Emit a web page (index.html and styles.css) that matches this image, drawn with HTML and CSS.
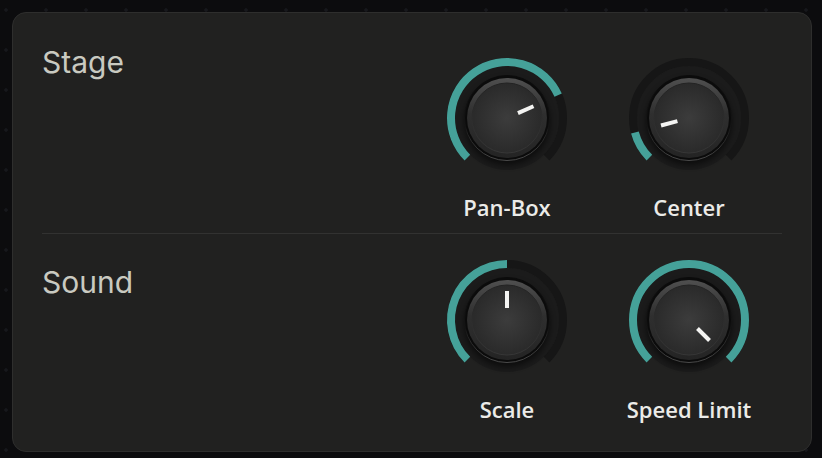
FILE: index.html
```html
<!DOCTYPE html>
<html lang="en">
<head>
    <meta charset="UTF-8">
    <meta name="viewport" content="width=device-width, initial-scale=1.0">
    <title>Stage &amp; Sound</title>
    <link rel="stylesheet" href="styles.css">
</head>
<body>
    <div class="panel">
        <div class="section section-first">
            <h2 class="section-title">Stage</h2>
            <div class="knobs">
                <div class="knob">
                    <svg class="dial" viewBox="0 0 120 120">
                        <use href="#dial-base"/>
                        <path class="value" d="M 20.40 99.60 A 56 56 0 1 1 111.16 37.22"/>
                        <use href="#dial-cap"/>
                        <line class="pointer" x1="60" y1="48" x2="60" y2="31" transform="rotate(66 60 60)"/>
                    </svg>
                    <div class="knob-label">Pan-Box</div>
                </div>
                <div class="knob">
                    <svg class="dial" viewBox="0 0 120 120">
                        <use href="#dial-base"/>
                        <path class="value" d="M 20.40 99.60 A 56 56 0 0 1 5.91 74.49"/>
                        <use href="#dial-cap"/>
                        <line class="pointer" x1="60" y1="48" x2="60" y2="31" transform="rotate(-105 60 60)"/>
                    </svg>
                    <div class="knob-label">Center</div>
                </div>
            </div>
        </div>
        <div class="section">
            <h2 class="section-title">Sound</h2>
            <div class="knobs">
                <div class="knob">
                    <svg class="dial" viewBox="0 0 120 120">
                        <use href="#dial-base"/>
                        <path class="value" d="M 20.40 99.60 A 56 56 0 0 1 60 4"/>
                        <use href="#dial-cap"/>
                        <line class="pointer" x1="60" y1="48" x2="60" y2="31"/>
                    </svg>
                    <div class="knob-label">Scale</div>
                </div>
                <div class="knob">
                    <svg class="dial" viewBox="0 0 120 120">
                        <use href="#dial-base"/>
                        <path class="value" d="M 20.40 99.60 A 56 56 0 1 1 99.60 99.60"/>
                        <use href="#dial-cap"/>
                        <line class="pointer" x1="60" y1="48" x2="60" y2="31" transform="rotate(135 60 60)"/>
                    </svg>
                    <div class="knob-label">Speed Limit</div>
                </div>
            </div>
        </div>
    </div>

    <!-- shared knob parts -->
    <svg class="defs" viewBox="0 0 120 120">
        <defs>
            <linearGradient id="rim" x1="0" y1="0" x2="0" y2="1">
                <stop offset="0" stop-color="#0b0b0b"/>
                <stop offset="0.6" stop-color="#151515"/>
                <stop offset="1" stop-color="#4a4a4a"/>
            </linearGradient>
            <linearGradient id="bevel" x1="0" y1="0" x2="0" y2="1">
                <stop offset="0" stop-color="#4f4f4f"/>
                <stop offset="0.45" stop-color="#2f2f2f"/>
                <stop offset="1" stop-color="#242424"/>
            </linearGradient>
            <radialGradient id="face" cx="0.5" cy="0.5" r="0.5">
                <stop offset="0" stop-color="#3c3c3c"/>
                <stop offset="1" stop-color="#2a2a2a"/>
            </radialGradient>
            <linearGradient id="face-edge" x1="0" y1="0" x2="0" y2="1">
                <stop offset="0" stop-color="#222"/>
                <stop offset="1" stop-color="#363636"/>
            </linearGradient>
            <filter id="soft" x="-30%" y="-30%" width="160%" height="160%">
                <feGaussianBlur stdDeviation="3"/>
            </filter>
            <g id="dial-base">
                <circle cx="60" cy="60" r="52" fill="#1b1b1b"/>
                <path class="track" d="M 20.40 99.60 A 56 56 0 1 1 99.60 99.60"/>
            </g>
            <g id="dial-cap">
                <circle cx="60" cy="64" r="43" fill="#000" opacity="0.55" filter="url(#soft)"/>
                <circle cx="60" cy="60" r="42.5" fill="#0b0b0b" stroke="url(#rim)" stroke-width="1"/>
                <circle cx="60" cy="60" r="40" fill="url(#bevel)"/>
                <circle cx="60" cy="60" r="35" fill="url(#face)" stroke="url(#face-edge)" stroke-width="1"/>
            </g>
        </defs>
    </svg>
</body>
</html>
```

FILE: styles.css
```css
body {
    margin: 0;
    padding: 12px;
    background-color: #0c0c0e;
    background-image: radial-gradient(circle, #17181c 1.5px, transparent 1.8px);
    background-size: 40px 40px;
    background-position: -14px -10px;
}

.panel {
    width: 800px;
    box-sizing: border-box;
    padding: 19px 29px 16px;
    background-color: #212120;
    border: 1px solid #2e2e2d;
    border-radius: 14px;
}

.section {
    display: flex;
    justify-content: space-between;
    align-items: flex-start;
    padding: 26px 0 11px;
}

.section + .section {
    border-top: 1px solid #323231;
}

.section-title {
    margin: 4px 0 0;
    font-family: Inter, "Liberation Sans", sans-serif;
    font-size: 30px;
    font-weight: 400;
    line-height: 36px;
    color: #c9cac1;
}

.section-first .section-title {
    margin-top: -14px;
}

.knobs {
    display: flex;
    gap: 32px;
    margin-right: 18px;
}

.knob {
    width: 150px;
    display: flex;
    flex-direction: column;
    align-items: center;
}

.dial {
    display: block;
    width: 120px;
    height: 120px;
    overflow: visible;
}

.track,
.value {
    fill: none;
    stroke-width: 8;
}

.track {
    stroke: #161616;
}

.value {
    stroke: #45a199;
}

.pointer {
    stroke: #f4f4f2;
    stroke-width: 4;
}

.knob-label {
    margin-top: 14px;
    font-family: "Open Sans", "Liberation Sans", sans-serif;
    font-size: 22px;
    font-weight: 600;
    line-height: 30px;
    color: #ebebe8;
    white-space: nowrap;
}

.defs {
    display: block;
    width: 0;
    height: 0;
    overflow: hidden;
}
```
